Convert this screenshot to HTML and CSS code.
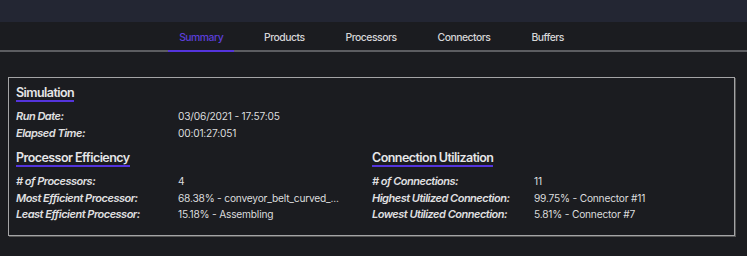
FILE: index.html
```html
<!DOCTYPE html>
<html>
<head>
<meta charset="utf-8">
<link rel="stylesheet" href="styles.css">
</head>
<body>
<div class="topbar"></div>
<nav class="tabs">
  <a class="tab active">Summary</a>
  <a class="tab">Products</a>
  <a class="tab">Processors</a>
  <a class="tab">Connectors</a>
  <a class="tab">Buffers</a>
</nav>
<main class="content">
  <section class="card">
    <div class="group">
      <h2 class="heading">Simulation</h2>
      <div class="row"><span class="label">Run Date:</span><span class="value">03/06/2021 - 17:57:05</span></div>
      <div class="row"><span class="label">Elapsed Time:</span><span class="value">00:01:27:051</span></div>
    </div>
    <div class="cols">
      <div class="group">
        <h2 class="heading">Processor Efficiency</h2>
        <div class="row"><span class="label"># of Processors:</span><span class="value">4</span></div>
        <div class="row"><span class="label">Most Efficient Processor:</span><span class="value trunc">68.38% - conveyor_belt_curved_...</span></div>
        <div class="row"><span class="label">Least Efficient Processor:</span><span class="value">15.18% - Assembling</span></div>
      </div>
      <div class="group">
        <h2 class="heading">Connection Utilization</h2>
        <div class="row"><span class="label"># of Connections:</span><span class="value">11</span></div>
        <div class="row"><span class="label">Highest Utilized Connection:</span><span class="value">99.75% - Connector #11</span></div>
        <div class="row"><span class="label">Lowest Utilized Connection:</span><span class="value">5.81% - Connector #7</span></div>
      </div>
    </div>
  </section>
</main>
</body>
</html>
```
FILE: styles.css
```css
* { box-sizing: border-box; }
html, body { margin: 0; padding: 0; }
body {
  background: #1b1c20;
  font-family: Inter, "Noto Sans", sans-serif;
  color: #e2e2e4;
  width: 747px;
  height: 256px;
  overflow: hidden;
}
.topbar {
  height: 22px;
  background: #232633;
}
.tabs {
  display: flex;
  justify-content: center;
  height: 30px;
  border-bottom: 2px solid #5c5d61;
  padding-right: 4px;
}
.tab {
  display: block;
  padding: 9px 20.5px 0;
  height: 30px;
  font-size: 10.4px;
  font-weight: 500;
  letter-spacing: -0.5px;
  color: #d6d6d8;
  line-height: 13px;
}
.tab.active {
  color: #5b3fd9;
  border-bottom: 2px solid #5434dc;
  padding-left: 11px;
  padding-right: 11px;
  margin: 0 9.5px;
}
.content {
  padding: 25px 12px 0 8px;
}
.card {
  border: 1px solid #a4a4a6;
  box-shadow: 1px 1px 0 #555;
  padding: 3px 7px 10px;
  height: 159px;
}
.cols {
  display: grid;
  grid-template-columns: 356px 1fr;
  margin-top: 5px;
}
.heading {
  display: inline-block;
  margin: 0 0 6px;
  font-size: 12.5px;
  font-weight: 600;
  letter-spacing: -0.55px;
  color: #e6e6e8;
  line-height: 15px;
  border-bottom: 2px solid #5434dc;
}
.row {
  display: grid;
  grid-template-columns: 162px 1fr;
  height: 16.5px;
  line-height: 16.5px;
  font-size: 11px;
}
.label {
  font-style: italic;
  font-weight: 600;
  letter-spacing: -0.5px;
  color: #e0e0e2;
}
.value {
  font-size: 10.2px;
  font-weight: 400;
  letter-spacing: -0.2px;
  color: #dcdcde;
}
```
